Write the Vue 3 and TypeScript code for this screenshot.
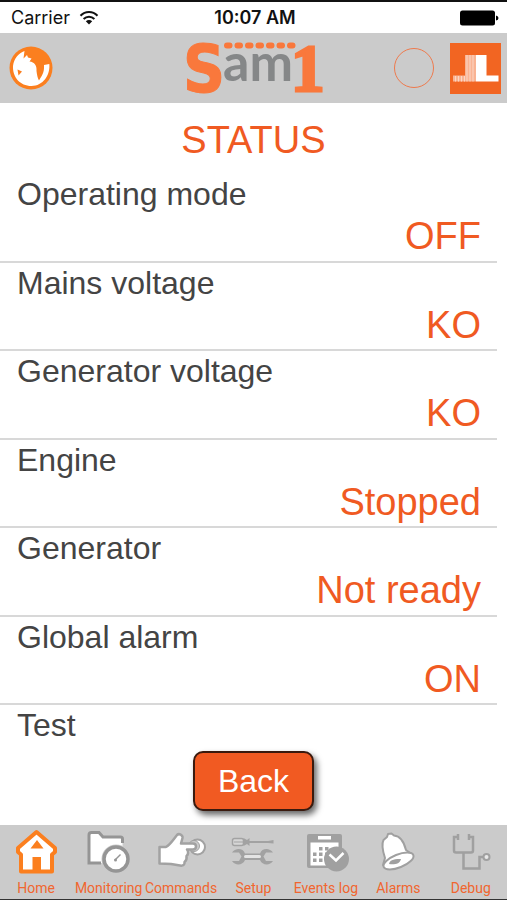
<script setup lang="ts">
interface StatusRow {
  label: string
  value: string
}

type IconName = 'home' | 'monitoring' | 'commands' | 'setup' | 'events' | 'alarms' | 'debug'

interface Tab {
  icon: IconName
  label: string
}

const rows: StatusRow[] = [
  { label: 'Operating mode', value: 'OFF' },
  { label: 'Mains voltage', value: 'KO' },
  { label: 'Generator voltage', value: 'KO' },
  { label: 'Engine', value: 'Stopped' },
  { label: 'Generator', value: 'Not ready' },
  { label: 'Global alarm', value: 'ON' },
  { label: 'Test', value: '' },
]

const tabs: Tab[] = [
  { icon: 'home', label: 'Home' },
  { icon: 'monitoring', label: 'Monitoring' },
  { icon: 'commands', label: 'Commands' },
  { icon: 'setup', label: 'Setup' },
  { icon: 'events', label: 'Events log' },
  { icon: 'alarms', label: 'Alarms' },
  { icon: 'debug', label: 'Debug' },
]
</script>

<template>
  <div class="screen">
    <div class="status-bar">
      <div class="carrier">
        <span>Carrier</span>
        <svg class="wifi" viewBox="0 0 20 16" aria-hidden="true">
          <path d="M1.500 5.800C6.300 .8 13.700 .8 18.500 5.800" />
          <path d="M4.600 9C7.700 6 12.300 6 15.400 9" />
          <path class="solid" d="M6.800 11.200C8.600 9.500 11.400 9.500 13.200 11.200L10 14.500Z" />
        </svg>
      </div>
      <time class="clock">10:07 AM</time>
      <svg class="battery" viewBox="0 0 40 16" aria-hidden="true">
        <rect x="1" y="0.500" width="35" height="15" rx="2.500" />
        <path d="M37 5.500Q39.500 6 39.500 8T37 10.500Z" />
      </svg>
    </div>

    <header class="header">
      <svg class="globe" viewBox="0 0 44 44" aria-hidden="true">
        <circle cx="22" cy="22" r="21.500" fill="#fb7f1f" />
        <path
          d="M15.500 5L14.500 12.500L18 9L19 11.500L22.500 12.500L20.500 15.500C25.500 16 28 19.500 27.500 25C28 29 28.500 32 30 34.500C32.500 30 35.500 27 35 19L40.300 18C41.500 29 34 40 22.500 40C11 40 3.500 31 4 20C5 12 9.500 7.500 15.500 5Z"
          fill="#fff"
        />
        <path d="M8.500 23.500L13 25.500L9.500 29.500Z" fill="#fb7f1f" />
      </svg>
      <svg class="brand" viewBox="0 0 136 54" role="img" aria-label="Sam1">
        <path class="dots" d="M40 4.500H106" />
        <text class="brand-s" x="-4" y="51">S</text>
        <text class="brand-am" x="36" y="40">am</text>
        <text class="brand-one" x="104" y="50">1</text>
      </svg>
      <div class="header-end">
        <span class="ring"></span>
        <svg class="maker" viewBox="0 0 51 51" aria-hidden="true">
          <rect width="51" height="51" fill="#f26522" />
          <path d="M3 32.500H15V12H26V38.500H3Z" fill="#f9b393" />
          <path d="M17 12V38.500M20 12V38.500M23 12V38.500M5.500 33V38.500M8.500 33V38.500M11.500 33V38.500M14.500 33V38.500" stroke="#fcd6c5" />
          <path d="M26 12H36.500V32.500H48.500V38.500H26Z" fill="#fff" />
        </svg>
      </div>
    </header>

    <main class="content">
      <h1 class="title">STATUS</h1>
      <dl class="rows">
        <div v-for="row in rows" :key="row.label" class="row">
          <dt class="label">{{ row.label }}</dt>
          <dd v-if="row.value" class="value">{{ row.value }}</dd>
        </div>
      </dl>
      <div class="actions">
        <button class="back" type="button">Back</button>
      </div>
    </main>

    <nav class="tabs">
      <a v-for="tab in tabs" :key="tab.icon" class="tab" href="#">
        <svg class="tab-icon" viewBox="0 0 60 48" aria-hidden="true">
          <g v-if="tab.icon === 'home'">
            <path d="M30.500 4L49 20V24L46 26.500V43.500H15V26.500L12 24V20Z" fill="#fff" stroke="#fb7f1f" stroke-width="4" stroke-linejoin="round" />
            <path d="M26.500 29H35V43H26.500ZM31 12L37.500 20.500H24.500Z" fill="#fb7f1f" />
          </g>
          <g v-else-if="tab.icon === 'monitoring'" fill="#fff" stroke="#959595">
            <path d="M22 35H10V7Q10 4.500 12.500 4.500H20L24 9H43.500V22L30 35Z" stroke="none" />
            <path d="M22 35H10V7Q10 4.500 12.500 4.500H20L24 9H41.500Q43.500 9 43.500 11V15" fill="none" stroke-width="3" />
            <circle cx="37" cy="31" r="14.500" fill="#cbcbcb" stroke="none" />
            <circle cx="37" cy="31" r="12" stroke-width="3.500" />
            <path d="M36 32L41.500 26.500" stroke-width="1.500" />
            <circle cx="36.500" cy="32" r="1.500" fill="#959595" stroke="none" />
          </g>
          <g v-else-if="tab.icon === 'commands'" stroke="#a2a2a2" stroke-linejoin="round">
            <circle cx="46.500" cy="19" r="7.500" fill="#fff" stroke-width="2" />
            <circle cx="43" cy="18" r="5.500" fill="#cbcbcb" stroke-width="1" />
            <path
              d="M8.500 19H15C19 17 22 12 26 7C28 5 32 7 31.500 10L30 15.500H42C46 15.500 46 21.500 42 21.500H36C38 24 37 27 35.500 28C36 31 35 33 33.500 34C34 37 32 38 29 37.500L20 36L8.500 35.500Z"
              fill="#fff"
              stroke-width="2.500"
            />
          </g>
          <g v-else-if="tab.icon === 'setup'" fill="#a2a2a2">
            <rect x="9.500" y="10.500" width="11" height="7" rx="2" fill="#d6d6d6" stroke="#a2a2a2" stroke-width="1.500" />
            <path d="M11 14H20" stroke="#a2a2a2" />
            <path d="M20.500 10L24 12L26.500 10V18L24 16L20.500 18ZM26 13H45L50.500 12V15.500L45 15H26Z" />
            <path d="M9 24.500C12 20 20 19.500 22 25.500H37C39 19.500 47 20 50 24.500H43L40.500 28.500L43 33H50C47 38 39 37.500 37 32H22C20 37.500 12 38 9 33H16L18.500 28.500L16 24.500Z" />
            <path d="M22.500 28.500H36.500" stroke="#e4e4e4" stroke-width="3" stroke-linecap="round" />
          </g>
          <g v-else-if="tab.icon === 'events'" fill="#a0a0a0">
            <rect x="11" y="6" width="35" height="34" rx="2" />
            <path d="M22 8H35V11.500H22ZM14.500 14.500H42.500V37.500H14.500Z" fill="#fff" />
            <path d="M23 19H26.500V22.500H23ZM29 19H32.500V22.500H29ZM17 24.500H20.500V28H17ZM23 24.500H26.500V28H23ZM29 24.500H32.500V28H29ZM17 30.500H20.500V34H17ZM23 30.500H26.500V34H23Z" />
            <circle cx="40.500" cy="31" r="12.500" />
            <path d="M33.500 26.500L40 32.500L47.500 25" fill="none" stroke="#fff" stroke-width="2.500" />
          </g>
          <g v-else-if="tab.icon === 'alarms'" fill="#fff" stroke="#a0a0a0" stroke-width="2">
            <path d="M15 37L17 30C15 24 13 17 15.500 12L19 9L20 6L23.500 5.500L26 7.500C33 8 36 14 38 22L45 27L30 37Z" stroke-linejoin="round" />
            <ellipse cx="30.500" cy="33" rx="16" ry="6.500" transform="rotate(-22 30.500 33)" />
            <path d="M21 36C22 31 28 31 33 31C32 36 26 37 21 36Z" fill="#a0a0a0" stroke="none" />
          </g>
          <g v-else fill="none" stroke="#a0a0a0" stroke-width="2.500">
            <path d="M17 9H13V22.500Q13 24.500 15 24.500H30Q32 24.500 32 22.500V9H28M17 6V12M28 6V12" />
            <path d="M22.500 24.500V40.500H38.500V29H42" />
            <circle cx="45.500" cy="29" r="3" fill="#e8e8e8" stroke-width="2" />
          </g>
        </svg>
        <span class="tab-label">{{ tab.label }}</span>
      </a>
    </nav>
  </div>
</template>

<style>
body {
  margin: 0;
  background: #fff;
}
</style>

<style scoped>
.screen {
  display: flex;
  flex-direction: column;
  box-sizing: border-box;
  height: 100vh;
  border-top: 2px solid #111;
  border-bottom: 1px solid #333;
  background: #fff;
  font-family: "Liberation Sans", Arial, sans-serif;
}

.status-bar {
  display: grid;
  grid-template-columns: 1fr auto 1fr;
  align-items: center;
  height: 31px;
  padding: 0 8px 0 11px;
  color: #111;
  font-family: Inter, sans-serif;
  font-size: 18px;
}

.carrier {
  display: flex;
  align-items: center;
  gap: 9px;
}

.wifi {
  width: 20px;
  height: 16px;
  fill: none;
  stroke: #111;
  stroke-width: 2;
}

.wifi .solid {
  fill: #111;
  stroke: none;
}

.clock {
  font-weight: 600;
}

.battery {
  justify-self: end;
  width: 40px;
  height: 16px;
}

.header {
  display: grid;
  grid-template-columns: 1fr auto 1fr;
  align-items: center;
  height: 70px;
  padding: 0 6px 0 9px;
  background: #cbcbcb;
}

.globe {
  width: 44px;
  height: 44px;
}

.brand {
  width: 136px;
  height: 54px;
  overflow: visible;
}

.dots {
  fill: none;
  stroke: #f9783c;
  stroke-width: 6;
  stroke-linecap: round;
  stroke-dasharray: 2.500 8;
}

.brand-s,
.brand-one {
  fill: #f9783c;
  stroke: #f9783c;
  font-weight: bold;
}

.brand-s {
  font-family: "DejaVu Sans Condensed", "DejaVu Sans", sans-serif;
  font-size: 65px;
  stroke-width: 1;
}

.brand-one {
  font-family: "Liberation Serif", serif;
  font-size: 67px;
  stroke-width: 3;
}

.brand-am {
  fill: #858788;
  font-family: Lato, sans-serif;
  font-size: 52px;
  font-weight: bold;
}

.header-end {
  display: flex;
  align-items: center;
  justify-content: flex-end;
  gap: 16px;
}

.ring {
  box-sizing: border-box;
  width: 40px;
  height: 40px;
  border: 1px solid #ee7a4d;
  border-radius: 50%;
}

.maker {
  width: 51px;
  height: 51px;
}

.content {
  display: flex;
  flex: 1;
  flex-direction: column;
  min-height: 0;
}

.title {
  margin: 0;
  padding: 4px 0 1px;
  color: #f05a22;
  font-size: 38px;
  font-weight: normal;
  line-height: 66px;
  text-align: center;
}

.rows {
  display: grid;
  flex: 1;
  grid-template-rows: repeat(6, 1fr) 40px;
  min-height: 0;
  margin: 0;
  padding-right: 10px;
}

.row {
  padding: 0 16px 0 17px;
  border-bottom: 2px solid #d8d8d8;
}

.row:last-child {
  border-bottom: 0;
}

.label {
  color: #444;
  font-size: 32px;
  line-height: 40px;
}

.value {
  margin: 0;
  color: #f05a22;
  font-size: 38px;
  line-height: 44px;
  text-align: right;
}

.actions {
  display: flex;
  justify-content: center;
  padding: 6px 0 14px;
}

.back {
  width: 121px;
  height: 60px;
  padding: 0;
  border: 2px solid #3a1a0e;
  border-radius: 10px;
  background: #f15a22;
  box-shadow: 3px 4px 6px rgba(0, 0, 0, 0.6);
  color: #fff;
  font-family: inherit;
  font-size: 32px;
}

.tabs {
  display: grid;
  grid-template-columns: repeat(7, 1fr);
  height: 74px;
  background: #cbcbcb;
}

.tab {
  display: flex;
  flex-direction: column;
  align-items: center;
  min-width: 0;
  padding-top: 3px;
  color: #f1662f;
  text-decoration: none;
}

.tab-icon {
  width: 60px;
  height: 48px;
}

.tab-label {
  font-family: Roboto, sans-serif;
  font-size: 14px;
  line-height: 24px;
  white-space: nowrap;
}
</style>
